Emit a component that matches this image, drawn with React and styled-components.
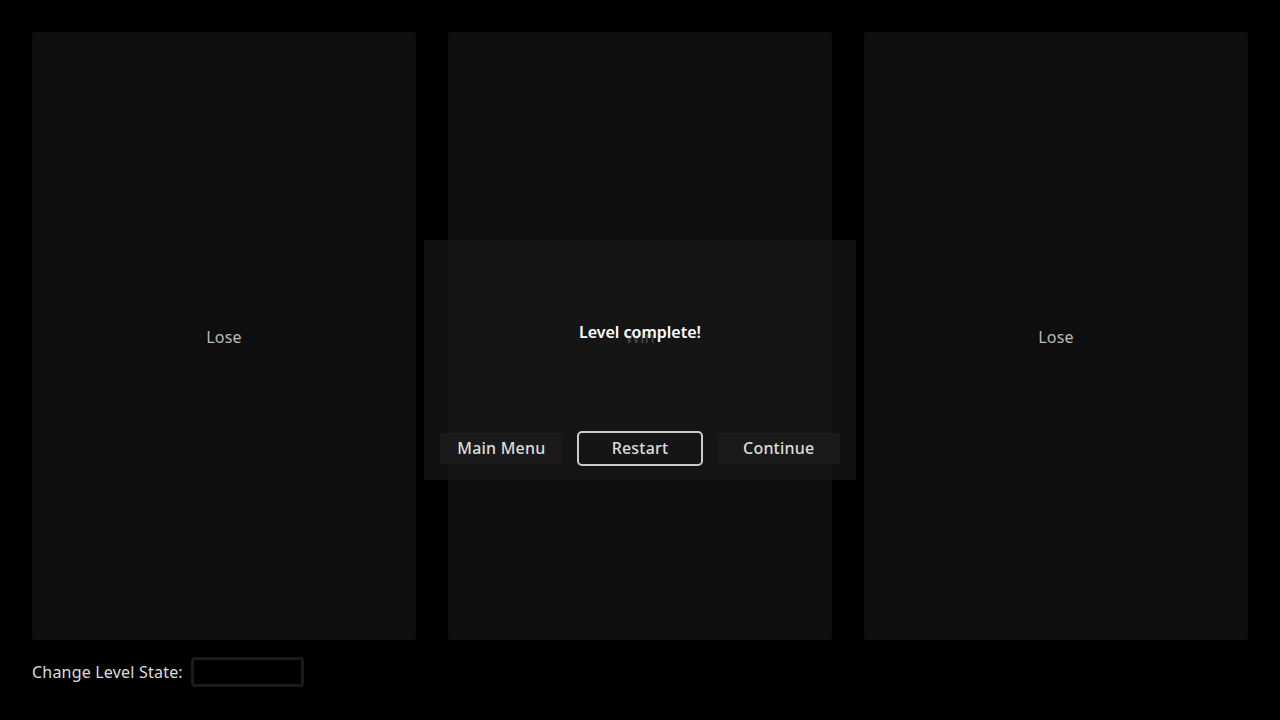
import React from "react";
import styled, { createGlobalStyle } from "styled-components";

const GlobalStyle = createGlobalStyle`
    html, body {
        margin: 0;
        padding: 0;
        background: #000;
    }
    body {
        font-family: "Noto Sans", "Open Sans", sans-serif;
        color: #ddd;
    }
`;

const levels = ["Lose", "Win", "Lose"];

export default function App() {
    return (
        <>
            <GlobalStyle />
            <Page>
                <Stage>
                    {levels.map((state, i) => (
                        <Panel key={i}>
                            <PanelLabel>{state}</PanelLabel>
                            {state === "Win" && (
                                <Dialog>
                                    <DialogTitle>Level complete!</DialogTitle>
                                    <ButtonRow>
                                        <Button>Main Menu</Button>
                                        <Button $focused>Restart</Button>
                                        <Button>Continue</Button>
                                    </ButtonRow>
                                </Dialog>
                            )}
                        </Panel>
                    ))}
                </Stage>
                <Controls>
                    <ControlLabel>Change Level State:</ControlLabel>
                    <Select />
                </Controls>
            </Page>
        </>
    );
}

const Page = styled.div`
    display: flex;
    flex-direction: column;
    gap: 16px;
    width: 1280px;
    height: 720px;
    padding: 32px;
    box-sizing: border-box;
`;

const Stage = styled.div`
    display: grid;
    grid-template-columns: repeat(3, 1fr);
    gap: 32px;
    height: 608px;
`;

const Panel = styled.div`
    position: relative;
    display: flex;
    align-items: center;
    justify-content: center;
    background: #0e0e0e;
    border-radius: 3px;
`;

const PanelLabel = styled.span`
    font-size: 16px;
    letter-spacing: 0.2px;
    color: #bbb;
    transform: translateY(1px);
`;

const Dialog = styled.div`
    position: absolute;
    left: -24px;
    right: -24px;
    top: 208px;
    height: 240px;
    display: flex;
    flex-direction: column;
    padding: 16px;
    box-sizing: border-box;
    background: rgba(24, 24, 24, 0.7);
    border-radius: 3px;
`;

const DialogTitle = styled.div`
    flex: 1;
    display: flex;
    align-items: center;
    justify-content: center;
    padding-bottom: 26px;
    font-size: 16px;
    font-weight: 600;
    color: #fff;
`;

const ButtonRow = styled.div`
    display: flex;
    gap: 16px;
`;

const Button = styled.button`
    all: unset;
    flex: 1;
    height: 31px;
    text-align: center;
    font-family: "Noto Sans", "Open Sans", sans-serif;
    font-size: 16px;
    font-weight: 500;
    letter-spacing: 0.2px;
    line-height: 31px;
    color: #ddd;
    border-radius: 3px;
    background: ${(props) => (props.$focused ? "transparent" : "#1a1a1a")};
    outline: ${(props) => (props.$focused ? "2px solid #ccc" : "none")};
    outline-offset: 0;
`;

const Controls = styled.div`
    display: flex;
    align-items: center;
    gap: 8px;
    height: 32px;
`;

const ControlLabel = styled.span`
    font-size: 16px;
    letter-spacing: 0.2px;
    color: #ddd;
`;

const Select = styled.div`
    width: 107px;
    height: 24px;
    border: 3px solid #1a1a1a;
    border-radius: 4px;
    background: #000;
`;
